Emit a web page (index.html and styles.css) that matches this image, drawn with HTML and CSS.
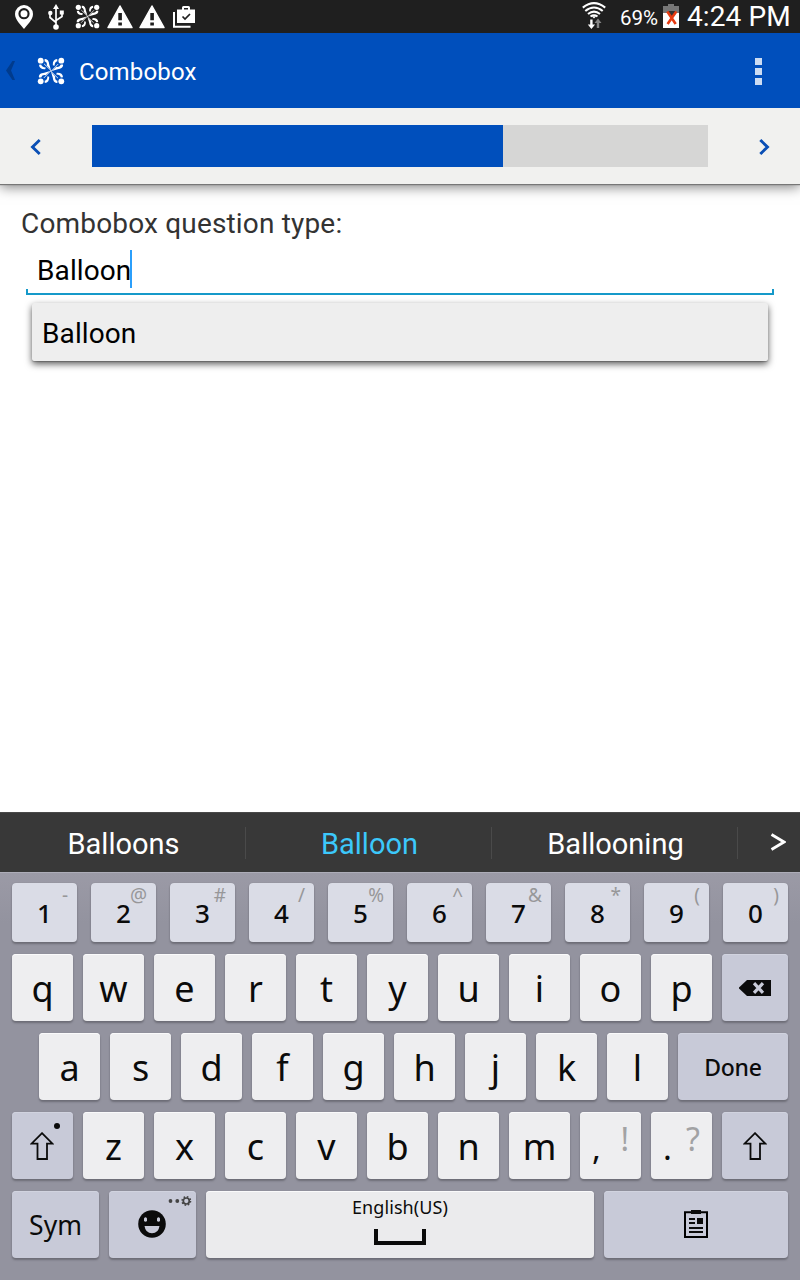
FILE: index.html
```
<!DOCTYPE html>
<html lang="en">
<head>
<meta charset="utf-8">
<title>Combobox</title>
<link rel="stylesheet" href="styles.css">
</head>
<body>
<svg class="defs" aria-hidden="true">
  <defs>
    <symbol id="logo" viewBox="0 0 28 28">
      <g id="logo-arm">
        <circle cx="3.7" cy="3.7" r="2.9"/>
        <path d="M7.6 2C10.3 1.4 12 4 12.2 7.2L14 13.2L9.8 8.6Q10.4 5.2 7.6 4.2Z"/>
        <path d="M2 7.8L4.2 7.6Q5 10.5 8.8 10.4L8.2 12.2Q2.3 12.5 2 7.8Z"/>
        <path d="M7 6.8L14.4 14" stroke="currentColor" stroke-width=".8"/>
      </g>
      <use href="#logo-arm" transform="rotate(90 14 14)"/>
      <use href="#logo-arm" transform="rotate(180 14 14)"/>
      <use href="#logo-arm" transform="rotate(270 14 14)"/>
    </symbol>
    <symbol id="warn" viewBox="0 0 26 24">
      <path d="M13 1L25 22.5H1Z" stroke="currentColor" stroke-width="1.5" stroke-linejoin="round"/>
      <path class="ink" d="M11.3 8h3.6v7.3h-3.6zM11.3 17.5h3.6v3h-3.6z"/>
    </symbol>
    <symbol id="shift" viewBox="0 0 24 28">
      <path d="M12 1.2L22.5 11.7H17V27H7.5V11.7H1.5Z" fill="none" stroke="#0b0b0b" stroke-width="1.8"/>
    </symbol>
  </defs>
</svg>

<header class="status">
  <div class="status-icons">
    <svg class="pin" viewBox="0 0 18 24"><path fill-rule="evenodd" d="M9 0A9 9 0 0 0 0 9C0 15 6 20 9 24C12 20 18 15 18 9A9 9 0 0 0 9 0ZM9 3.1A5.6 5.6 0 1 1 9 14.3A5.6 5.6 0 1 1 9 3.1Z"/><circle cx="9" cy="8.7" r="3.5"/></svg>
    <svg class="usb" viewBox="0 0 16 26"><path d="M8 3V24M2 9V13.5L8 18.5M14 9V12.5L8 16.5" fill="none" stroke="currentColor" stroke-width="1.7"/><path d="M8 0L11 5H5Z"/><circle cx="8" cy="23" r="2.8"/><circle cx="2.3" cy="9" r="2.2"/><path d="M11.8 6.5h4v4h-4z"/></svg>
    <svg class="mark"><use href="#logo"/></svg>
    <svg class="warn"><use href="#warn"/></svg>
    <svg class="warn"><use href="#warn"/></svg>
    <svg class="bag" viewBox="0 0 22 22"><path d="M1 6V20.7H17.5" fill="none" stroke="currentColor" stroke-width="2"/><path fill-rule="evenodd" d="M4 3.5h5V1.5Q9 0 10.5 0h5Q17 0 17 1.5V3.5h5V17H4ZM11 2V3.5h4V2Z"/><path d="M9.5 10.5L12 13L17 8" fill="none" stroke="#1f1f1f" stroke-width="1.7"/></svg>
  </div>
  <div class="status-right">
    <svg class="wifi" viewBox="0 0 24 28"><g fill="none" stroke="currentColor" stroke-width="2.1"><path d="M.8 5.6Q12-3.3 23.2 5.6M3.3 9Q12 2 20.7 9M6 12Q12 7.2 18 12M8.5 14.5Q12 12 15.5 14.5"/></g><path d="M9.8 14.2h4.4L12 16.4ZM8.2 17.5h2.4v5h2.5L9.4 27L5.8 22.5h2.4z"/><path d="M14.8 26V21h-2.3L16 16.5L19.5 21H17.2v5z" fill="#858585"/></svg>
    <span class="percent">69%</span>
    <svg class="battery" viewBox="0 0 16 24"><path d="M0 9h16v15H0z"/><path d="M0 2h5V0h6v2h5v7H0z" fill="#777"/><path d="M5 7h7v3l-2 2.500H7L5 10z" fill="#333"/><path d="M4.300 7.500L12.700 20M13.300 7.500L4.600 20" stroke="#e63b12" stroke-width="2.600"/></svg>
    <time class="clock">4:24 PM</time>
  </div>
</header>

<nav class="appbar">
  <svg class="up" viewBox="0 0 10 20"><path d="M6.400 0H9L5 9.500L9 19H6.400L0 9.500Z"/></svg>
  <svg class="app-logo"><use href="#logo"/></svg>
  <h1 class="app-title">Combobox</h1>
  <svg class="more" viewBox="0 0 7 28"><path d="M0 0h7v7H0zM0 10h7v7H0zM0 20h7v7H0z"/></svg>
</nav>

<section class="progress-row">
  <svg class="chev" viewBox="0 0 12 18"><path d="M9.700 2L2.500 9L9.700 16" /></svg>
  <div class="progress"><div class="progress-fill"></div></div>
  <svg class="chev" viewBox="0 0 12 18"><path d="M2.300 2L9.500 9L2.300 16" /></svg>
</section>

<main class="content">
  <p class="question">Combobox question type:</p>
  <div class="field"><span class="field-text">Balloon</span><i class="caret"></i></div>
  <div class="dropdown"><span class="option-text">Balloon</span></div>
</main>

<footer class="ime">
  <div class="suggest">
    <div class="word">Balloons</div>
    <div class="word active">Balloon</div>
    <div class="word">Ballooning</div>
    <svg class="next" viewBox="0 0 16 18"><path d="M1.500 1.500L14 9L1.500 16.500"/></svg>
  </div>
  <div class="keys">
    <div class="row nums">
      <div class="key num">1<sup>-</sup></div><div class="key num">2<sup>@</sup></div><div class="key num">3<sup>#</sup></div><div class="key num">4<sup>/</sup></div><div class="key num">5<sup>%</sup></div><div class="key num">6<sup>^</sup></div><div class="key num">7<sup>&amp;</sup></div><div class="key num">8<sup>*</sup></div><div class="key num">9<sup>(</sup></div><div class="key num">0<sup>)</sup></div>
    </div>
    <div class="row">
      <div class="key">q</div><div class="key">w</div><div class="key">e</div><div class="key">r</div><div class="key">t</div><div class="key">y</div><div class="key">u</div><div class="key">i</div><div class="key">o</div><div class="key">p</div>
      <div class="key fn grow"><svg class="back" viewBox="0 0 32 16"><path d="M8 0H32V16H8L0 8.500V7.500Z" fill="#0b0b0b"/><path d="M15 3.200L24 12.800M24 3.200L15 12.800" stroke="#c8cad8" stroke-width="3.200"/></svg></div>
    </div>
    <div class="row indent">
      <div class="key">a</div><div class="key">s</div><div class="key">d</div><div class="key">f</div><div class="key">g</div><div class="key">h</div><div class="key">j</div><div class="key">k</div><div class="key">l</div>
      <div class="key fn grow done">Done</div>
    </div>
    <div class="row">
      <div class="key fn"><svg class="shift"><use href="#shift"/></svg><i class="dot"></i></div>
      <div class="key">z</div><div class="key">x</div><div class="key">c</div><div class="key">v</div><div class="key">b</div><div class="key">n</div><div class="key">m</div>
      <div class="key punct">,<sup>!</sup></div><div class="key punct">.<sup>?</sup></div>
      <div class="key fn grow"><svg class="shift"><use href="#shift"/></svg></div>
    </div>
    <div class="row">
      <div class="key fn wide sym">Sym</div>
      <div class="key fn wide">
        <svg class="smile" viewBox="0 0 28 28"><circle cx="14" cy="14" r="13.800" fill="#0b0b0b"/><path d="M6 8.500Q7.500 6 9 8.500V11Q7.500 12.500 6 11ZM19 8.500Q20.500 6 22 8.500V11Q20.500 12.500 19 11ZM6.500 16h15Q20.500 23.300 14 23.300T6.500 16Z" fill="#c8cad8"/></svg>
        <svg class="opts" viewBox="0 0 24 10"><circle cx="2.500" cy="5" r="1.900"/><circle cx="9.300" cy="5" r="1.900"/><circle cx="18.300" cy="5" r="3" fill="none" stroke="#444" stroke-width="1.700"/><circle cx="18.300" cy="5" r="4.200" fill="none" stroke="#444" stroke-width="1.600" stroke-dasharray="1.600 1.700"/></svg>
      </div>
      <div class="key space"><span class="lang">English(US)</span><i class="bar"></i></div>
      <div class="key fn grow"><svg class="clip" viewBox="0 0 24 28"><path d="M1 2.200H23V27H1Z" fill="none" stroke="#000" stroke-width="2"/><path d="M7 0h10v4H7zM13 8h6v6h-6zM5 8h6v2H5zM5 12h6v2H5zM5 17h14v2H5zM5 21h14v2H5z"/></svg></div>
    </div>
  </div>
</footer>
</body>
</html>
```

FILE: styles.css
```
* { box-sizing: border-box; }
body {
  margin: 0;
  width: 800px;
  height: 1280px;
  display: flex;
  flex-direction: column;
  background: #fff;
  font-family: Roboto, sans-serif;
  overflow: hidden;
}
svg { display: block; flex: none; fill: currentColor; }
.defs { position: absolute; width: 0; height: 0; }
.ink { fill: #1f1f1f; }

.status {
  height: 33px;
  flex: none;
  display: flex;
  justify-content: space-between;
  background: #1f1f1f;
  color: #fff;
}
.status-icons { display: flex; align-items: flex-start; padding: 4px 0 0 15px; }
.pin { width: 18px; height: 24px; margin-top: 1px; }
.usb { width: 16px; height: 26px; margin-left: 15px; }
.mark { width: 25px; height: 25px; margin-left: 11px; }
.warn { width: 26px; height: 24px; margin: 1px 0 0 6px; }
.mark + .warn { margin-left: 7px; }
.bag { width: 22px; height: 22px; margin: 2px 0 0 8px; }
.status-right { display: flex; align-items: flex-start; padding-right: 9px; }
.wifi { width: 24px; height: 28px; margin-top: 2px; }
.percent { font-size: 20.5px; line-height: 24px; margin: 6px 0 0 14px; width: 39px; }
.battery { width: 16px; height: 24px; margin: 4px 8px 0 4px; }
.clock { font-size: 28px; line-height: 33px; width: 104px; white-space: nowrap; letter-spacing: .1px; }

.appbar {
  height: 75px;
  flex: none;
  display: flex;
  align-items: center;
  padding: 0 38px 0 6px;
  background: #004fbc;
  color: #fff;
  position: relative;
  z-index: 1;
}
.up { width: 10px; height: 20px; fill: #003b8d; margin-top: 1px; }
.app-logo { width: 28px; height: 28px; margin: 0 0 0 21px; }
.app-title { margin: 3px 0 0 14px; font-size: 24px; font-weight: 400; line-height: 28px; letter-spacing: .15px; }
.more { width: 7px; height: 28px; margin: 2px 0 0 auto; fill: #ccdcf2; }

.progress-row {
  height: 76px;
  flex: none;
  display: flex;
  align-items: center;
  justify-content: space-between;
  padding: 0 30px 0 30px;
  background: #f1f1ef;
  box-shadow: 0 1px 1px #777, 0 3px 12px rgba(0, 0, 0, .5);
}
.chev { width: 12px; height: 18px; margin-top: 1px; fill: none; stroke: #0a4fb5; stroke-width: 2.9; }
.progress { width: 616px; height: 42px; background: #d6d6d5; }
.progress-fill { width: 411px; height: 100%; background: #004fbc; }

.content { flex: 1; padding: 23px 26px 0; }
.question { margin: 0 0 0 -5px; font-size: 28px; line-height: 34px; letter-spacing: .17px; color: #333; white-space: nowrap; }
.field {
  display: flex;
  height: 54px;
  padding: 9px 0 0 11px;
  background:
    linear-gradient(#1599c9, #1599c9) 0 100% / 2px 6px no-repeat,
    linear-gradient(#1599c9, #1599c9) 100% 100% / 2px 6px no-repeat,
    linear-gradient(#1599c9, #1599c9) 0 100% / 100% 2px no-repeat;
}
.field-text { font-size: 28px; line-height: 42px; color: #000; letter-spacing: .1px; }
.caret { width: 2px; height: 38px; margin-left: -1px; background: #2b9ffb; }
.dropdown {
  height: 58px;
  margin: 8px 6px 0;
  padding-left: 10px;
  border-radius: 2px;
  background: #eee;
  box-shadow: 0 3px 7px rgba(0, 0, 0, .65), 0 1px 1px rgba(0, 0, 0, .2);
  font-size: 28px;
  line-height: 62px;
  letter-spacing: .1px;
  color: #000;
}

.ime { height: 468px; flex: none; }
.suggest { display: flex; align-items: center; height: 60px; background: #383838; border-top: 1px solid #494949; color: #fff; }
.word {
  width: 246px;
  height: 32px;
  padding-left: 2px;
  border-right: 1px solid #4a4a4a;
  font-size: 29px;
  line-height: 34px;
  text-align: center;
}
.active { color: #3cc8fb; }
.next { width: 16px; height: 18px; margin: -2px 0 0 32px; fill: none; stroke: #fff; stroke-width: 2.8; }

.keys {
  height: 408px;
  display: flex;
  flex-direction: column;
  gap: 12px;
  padding: 10px 12px 0;
  border-top: 1px solid #adadb8;
  background: linear-gradient(#9b9aa6, #93939f 50px);
  font-family: "Noto Sans", sans-serif;
  color: #0b0b0b;
}
.row { display: flex; gap: 10px; height: 67px; }
.nums { gap: 14px; height: 59px; }
.indent { padding-left: 27px; }
.key {
  position: relative;
  display: flex;
  justify-content: center;
  align-items: center;
  width: 61px;
  height: 100%;
  border-radius: 4px;
  background: #eeeef0;
  box-shadow: 0 2px 2px #6d6d77, 0 0 1px #777783, inset 0 1px #fafafb;
  font-size: 36px;
  line-height: 67px;
  padding-top: 2px;
}
.fn { background: #c8cad8; box-shadow: 0 2px 2px #6d6d77, 0 0 1px #777783, inset 0 1px #d1d3df; padding-top: 0; }
.grow { flex: 1; }
.num { width: 65px; background: #dadce6; box-shadow: 0 2px 2px #6d6d77, 0 0 1px #777783; font-size: 26px; font-weight: 500; padding-top: 1px; }
.key sup { position: absolute; right: 9px; top: 0; font-size: 19px; font-weight: 400; line-height: 24px; color: #979799; }
.back { width: 32px; height: 16px; margin-top: 1px; }
.done { font-size: 23px; font-weight: 500; padding-top: 2px; letter-spacing: -.2px; }
.shift { width: 24px; height: 28px; margin-left: -1px; }
.dot { position: absolute; right: 13px; top: 11px; width: 6px; height: 6px; border-radius: 50%; background: #0b0b0b; }
.punct { justify-content: flex-start; padding: 4px 0 0 12px; font-size: 33px; }
.punct sup { right: 12px; top: 10px; font-size: 32px; line-height: 34px; color: #a2a2a4; }
.wide { width: 87px; }
.sym { font-size: 26.5px; padding-top: 1px; font-weight: 400; }
.smile { width: 28px; height: 28px; margin: -1px 2px 0 0; }
.opts { position: absolute; right: 4px; top: 5px; width: 24px; height: 10px; fill: #444; }
.space { width: 388px; flex-direction: column; justify-content: flex-start; padding-top: 5px; background: #ebebed; }
.lang { font-size: 18px; line-height: 22px; letter-spacing: .1px; }
.bar { width: 52px; height: 16px; margin-top: 11px; border: 4px solid #0b0b0b; border-top: 0; }
.clip { width: 24px; height: 28px; margin-top: -1px; }
```
